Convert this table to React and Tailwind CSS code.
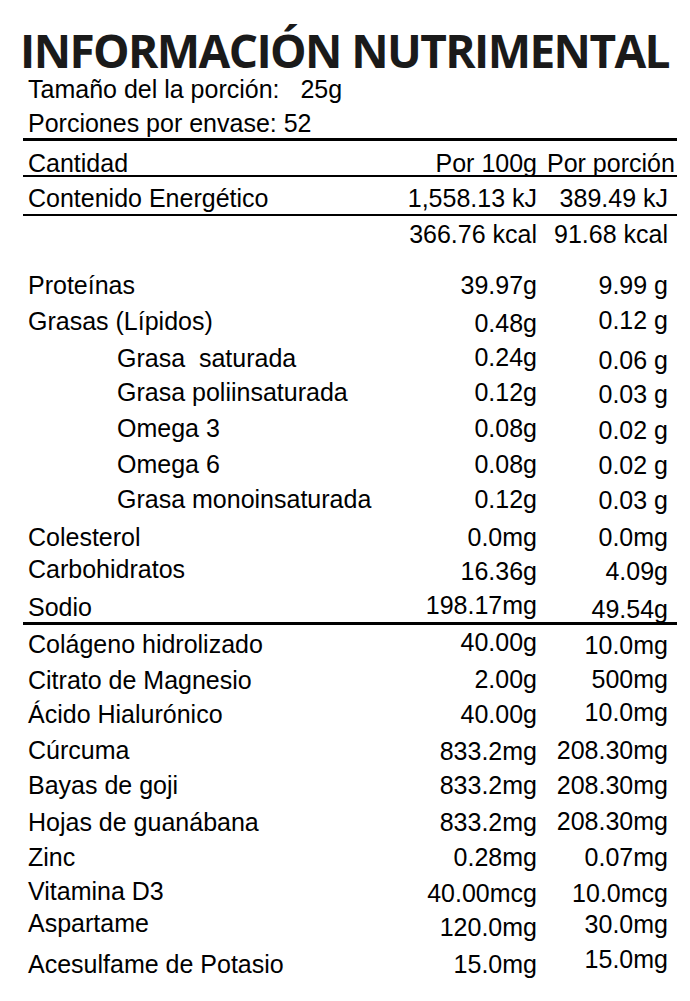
const rows = [
  // section after the kcal line
  { l: "Proteínas", a: "39.97g", b: "9.99 g", h: "h-[51px]", pl: "pt-[27px]", pa: "pt-[27px]", pb: "pt-[27px]" },
  { l: "Grasas (Lípidos)", a: "0.48g", b: "0.12 g", h: "h-[36px]", pl: "pt-[12px]", pa: "pt-[14px]", pb: "pt-[11px]" },
  { l: "Grasa  saturada", a: "0.24g", b: "0.06 g", h: "h-[37px]", pl: "pt-[13px]", pa: "pt-[12px]", pb: "pt-[15px]", sub: true },
  { l: "Grasa poliinsaturada", a: "0.12g", b: "0.03 g", h: "h-[34px]", pl: "pt-[10px]", pa: "pt-[10px]", pb: "pt-[12px]", sub: true },
  { l: "Omega 3", a: "0.08g", b: "0.02 g", h: "h-[36px]", pl: "pt-[12px]", pa: "pt-[12px]", pb: "pt-[14px]", sub: true },
  { l: "Omega 6", a: "0.08g", b: "0.02 g", h: "h-[36px]", pl: "pt-[12px]", pa: "pt-[12px]", pb: "pt-[13px]", sub: true },
  { l: "Grasa monoinsaturada", a: "0.12g", b: "0.03 g", h: "h-[35px]", pl: "pt-[11px]", pa: "pt-[11px]", pb: "pt-[12px]", sub: true },
  { l: "Colesterol", a: "0.0mg", b: "0.0mg", h: "h-[38px]", pl: "pt-[14px]", pa: "pt-[14px]", pb: "pt-[14px]" },
  { l: "Carbohidratos", a: "16.36g", b: "4.09g", h: "h-[32px]", pl: "pt-[8px]", pa: "pt-[10px]", pb: "pt-[10px]" },
  { l: "Sodio", a: "198.17mg", b: "49.54g", h: "h-[38px]", pl: "pt-[14px]", pa: "pt-[12px]", pb: "pt-[16px]" },
];

const extras = [
  { l: "Colágeno hidrolizado", a: "40.00g", b: "10.0mg", h: "h-[31px]", pl: "pt-[7px]", pa: "pt-[5px]", pb: "pt-[8px]" },
  { l: "Citrato de Magnesio", a: "2.00g", b: "500mg", h: "h-[36px]", pl: "pt-[12px]", pa: "pt-[11px]", pb: "pt-[11px]" },
  { l: "Ácido Hialurónico", a: "40.00g", b: "10.0mg", h: "h-[34px]", pl: "pt-[10px]", pa: "pt-[10px]", pb: "pt-[8px]" },
  { l: "Cúrcuma", a: "833.2mg", b: "208.30mg", h: "h-[36px]", pl: "pt-[12px]", pa: "pt-[13px]", pb: "pt-[12px]" },
  { l: "Bayas de goji", a: "833.2mg", b: "208.30mg", h: "h-[35px]", pl: "pt-[11px]", pa: "pt-[11px]", pb: "pt-[11px]" },
  { l: "Hojas de guanábana", a: "833.2mg", b: "208.30mg", h: "h-[37px]", pl: "pt-[13px]", pa: "pt-[13px]", pb: "pt-[12px]" },
  { l: "Zinc", a: "0.28mg", b: "0.07mg", h: "h-[35px]", pl: "pt-[11px]", pa: "pt-[11px]", pb: "pt-[11px]" },
  { l: "Vitamina D3", a: "40.00mcg", b: "10.0mcg", h: "h-[35px]", pl: "pt-[10px]", pa: "pt-[12px]", pb: "pt-[12px]" },
  { l: "Aspartame", a: "120.0mg", b: "30.0mg", h: "h-[33px]", pl: "pt-[7px]", pa: "pt-[11px]", pb: "pt-[8px]" },
  { l: "Acesulfame de Potasio", a: "15.0mg", b: "15.0mg", h: "h-[39px]", pl: "pt-[15px]", pa: "pt-[15px]", pb: "pt-[10px]" },
];

function Row({ r }) {
  return (
    <div className={`flex items-start whitespace-nowrap ${r.h}`}>
      <div className={`flex-1 whitespace-pre ${r.sub ? "pl-[94px]" : "pl-[5px]"} ${r.pl}`}>{r.l}</div>
      <div className={`w-[150px] pr-[10px] text-right ${r.pa}`}>{r.a}</div>
      <div className={`w-[130px] pr-[9px] text-right ${r.pb}`}>{r.b}</div>
    </div>
  );
}

export default function App() {
  return (
    <div className="w-[690px] h-[1001px] bg-white text-black overflow-hidden">
      <h1
        className="pt-[26px] pl-[20px] text-[46px] leading-[48px] font-bold text-[#1a1a1a] tracking-[-1.6px] whitespace-nowrap"
        style={{ fontFamily: '"Open Sans", sans-serif' }}
      >
        INFORMACIÓN NUTRIMENTAL
      </h1>

      <div
        className="pl-[23px] pr-[13px] text-[25px] leading-[24px]"
        style={{ fontFamily: '"Liberation Sans", Arial, sans-serif' }}
      >
        <div className="pt-[3px] pl-[5px] whitespace-pre">Tamaño del la porción:   25g</div>
        <div className="pt-[10px] pl-[5px]">Porciones por envase: 52</div>
        <div className="mt-[3px] h-[3px] bg-black" />

        <div className="flex items-start pt-[10px] border-b-2 border-black whitespace-nowrap">
          <div className="flex-1 pl-[5px]">Cantidad</div>
          <div className="w-[150px] pr-[10px] text-right">Por 100g</div>
          <div className="w-[130px] pr-[9px] text-right">Por porción</div>
        </div>

        <div className="flex items-start pt-[9px] pb-[4px] border-b-2 border-black whitespace-nowrap">
          <div className="flex-1 pl-[5px]">Contenido Energético</div>
          <div className="w-[150px] pr-[10px] text-right">1,558.13 kJ</div>
          <div className="w-[130px] pr-[9px] text-right">389.49 kJ</div>
        </div>

        <div className="flex items-start pt-[6px] whitespace-nowrap">
          <div className="flex-1" />
          <div className="w-[150px] pr-[10px] text-right">366.76 kcal</div>
          <div className="w-[130px] pr-[9px] text-right">91.68 kcal</div>
        </div>

        {rows.map((r) => (
          <Row key={r.l} r={r} />
        ))}

        <div className="mt-[3px] h-[3px] bg-black" />

        {extras.map((r) => (
          <Row key={r.l} r={r} />
        ))}
      </div>
    </div>
  );
}
